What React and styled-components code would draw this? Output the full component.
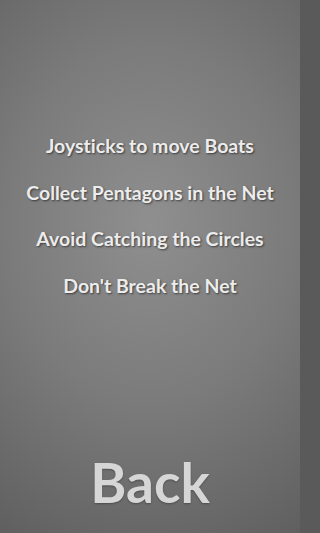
import React from 'react'
import styled, { createGlobalStyle } from 'styled-components'

const GlobalStyle = createGlobalStyle`
html, body {
  margin: 0;
  padding: 0;
  height: 100%;
  overflow: hidden;
  background: #5a5a5a;
}
body {
  font-family: Lato, "Liberation Sans", sans-serif;
}
#root {
  height: 100%;
}
`

const rules = [
  'Joysticks to move Boats',
  'Collect Pentagons in the Net',
  'Avoid Catching the Circles',
  "Don't Break the Net",
]

function App() {
  return (
    <>
      <GlobalStyle />
      <Screen>
        <RuleList>
          {rules.map((r) => (
            <Rule key={r}>{r}</Rule>
          ))}
        </RuleList>
        <BackButton>Back</BackButton>
      </Screen>
    </>
  )
}

const Screen = styled.div`
width: 300px;
height: 533px;
display: flex;
flex-direction: column;
align-items: center;
background: radial-gradient(ellipse 105% 75% at 50% 42%, #8f8f8f 0%, #7b7b7b 45%, #5a5a5a 100%);
overflow: hidden;
`

const RuleList = styled.div`
display: flex;
flex-direction: column;
align-items: center;
gap: 21.5px;
margin-top: 133px;
`

const Rule = styled.div`
color: #ececec;
font-size: 19.5px;
font-weight: 700;
line-height: 25px;
font-variant-ligatures: none;
text-shadow: 1px 1px 2px rgba(0, 0, 0, 0.55);
white-space: nowrap;
`

const BackButton = styled.button`
margin-top: auto;
margin-bottom: 19px;
background: none;
border: none;
padding: 0;
font-family: Lato, "Liberation Sans", sans-serif;
font-size: 55px;
font-weight: 700;
line-height: 64px;
color: #d6d6d6;
text-shadow: 0 1px 2px rgba(0, 0, 0, 0.3);
cursor: pointer;
`

export default App
